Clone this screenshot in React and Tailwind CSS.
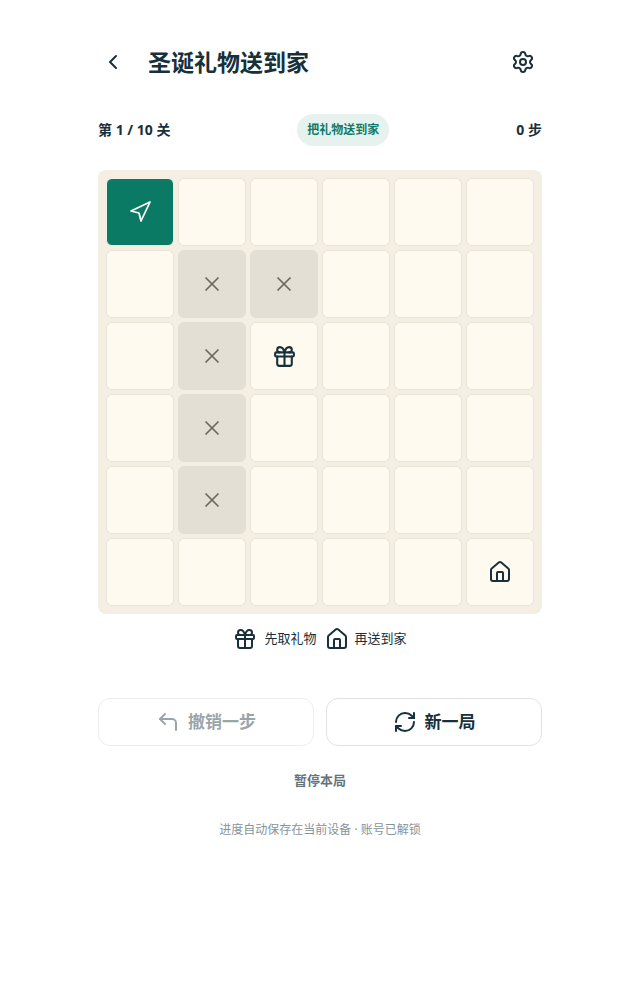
import { ChevronLeft, Settings, Navigation, X, Gift, House, CornerUpLeft, RefreshCw } from 'lucide-react';

const font = { fontFamily: '"Noto Sans", "Noto Sans CJK SC", sans-serif' };

const blocked = ['1-1', '1-2', '2-1', '3-1', '4-1'];

const Cell = ({ r, c }) => {
    const key = `${r}-${c}`;
    if (key === '0-0') {
        return (
            <div className="w-[68px] h-[68px] flex items-center justify-center rounded-md bg-[#0b7a65] border border-[#f5efe3] text-white">
                <Navigation size={24} strokeWidth={1.75} />
            </div>
        );
    }
    if (blocked.includes(key)) {
        return (
            <div className="w-[68px] h-[68px] flex items-center justify-center rounded-md bg-[#e3dfd5] text-[#6f675e]">
                <X size={24} strokeWidth={1.75} />
            </div>
        );
    }
    return (
        <div className="w-[68px] h-[68px] flex items-center justify-center rounded-md bg-[#fefaf0] border border-[#e9e4d8] text-[#17303a]">
            {key === '2-2' && <Gift size={25} strokeWidth={2} />}
            {key === '5-5' && <House size={24} strokeWidth={2} />}
        </div>
    );
};

const rows = [0, 1, 2, 3, 4, 5];

export default function App() {
    return (
        <div className="w-[640px] h-[1000px] bg-white px-[98px] text-[#17303a]" style={font}>
            <div className="h-[124px] flex items-center justify-between">
                <div className="flex items-center">
                    <ChevronLeft size={24} strokeWidth={2} className="ml-[3px]" />
                    <h1 className="ml-[23px] text-[23px] leading-8 font-bold">圣诞礼物送到家</h1>
                </div>
                <Settings size={24} strokeWidth={2} className="mr-[7px]" />
            </div>

            <div className="h-8 mt-[-10px] flex items-center justify-between text-sm font-bold">
                <span>第 1 / 10 关</span>
                <span className="h-8 px-[10px] flex items-center rounded-full bg-[#e7f2ee] text-[#0f7b66] text-xs">把礼物送到家</span>
                <span>0 步</span>
            </div>

            <div className="mt-6 p-2 flex flex-col gap-1 rounded-lg bg-[#f5efe3]">
                {rows.map((r) => (
                    <div key={r} className="flex gap-1">
                        {rows.map((c) => (
                            <Cell key={c} r={r} c={c} />
                        ))}
                    </div>
                ))}
            </div>

            <div className="mt-[13px] h-6 flex items-center justify-center text-[13px]">
                <Gift size={24} strokeWidth={2} />
                <span className="ml-[7px]">先取礼物</span>
                <House size={24} strokeWidth={2} className="ml-2" />
                <span className="ml-[6px]">再送到家</span>
            </div>

            <div className="mt-[47px] flex gap-3">
                <button className="flex-1 h-12 flex items-center justify-center gap-2 rounded-xl bg-white border border-[#ecedee] text-[#9aa5a9] text-[17px] font-bold">
                    <CornerUpLeft size={24} strokeWidth={2} />
                    <span>撤销一步</span>
                </button>
                <button className="flex-1 h-12 flex items-center justify-center gap-2 rounded-xl bg-white border border-[#dfe3e5] text-[17px] font-bold">
                    <RefreshCw size={24} strokeWidth={2} />
                    <span>新一局</span>
                </button>
            </div>

            <p className="mt-6 text-center text-[13px] leading-5 font-bold text-[#64747a]">暂停本局</p>
            <p className="mt-[30px] text-center text-xs leading-5 text-[#87949a]">进度自动保存在当前设备 · 账号已解锁</p>
        </div>
    );
}
